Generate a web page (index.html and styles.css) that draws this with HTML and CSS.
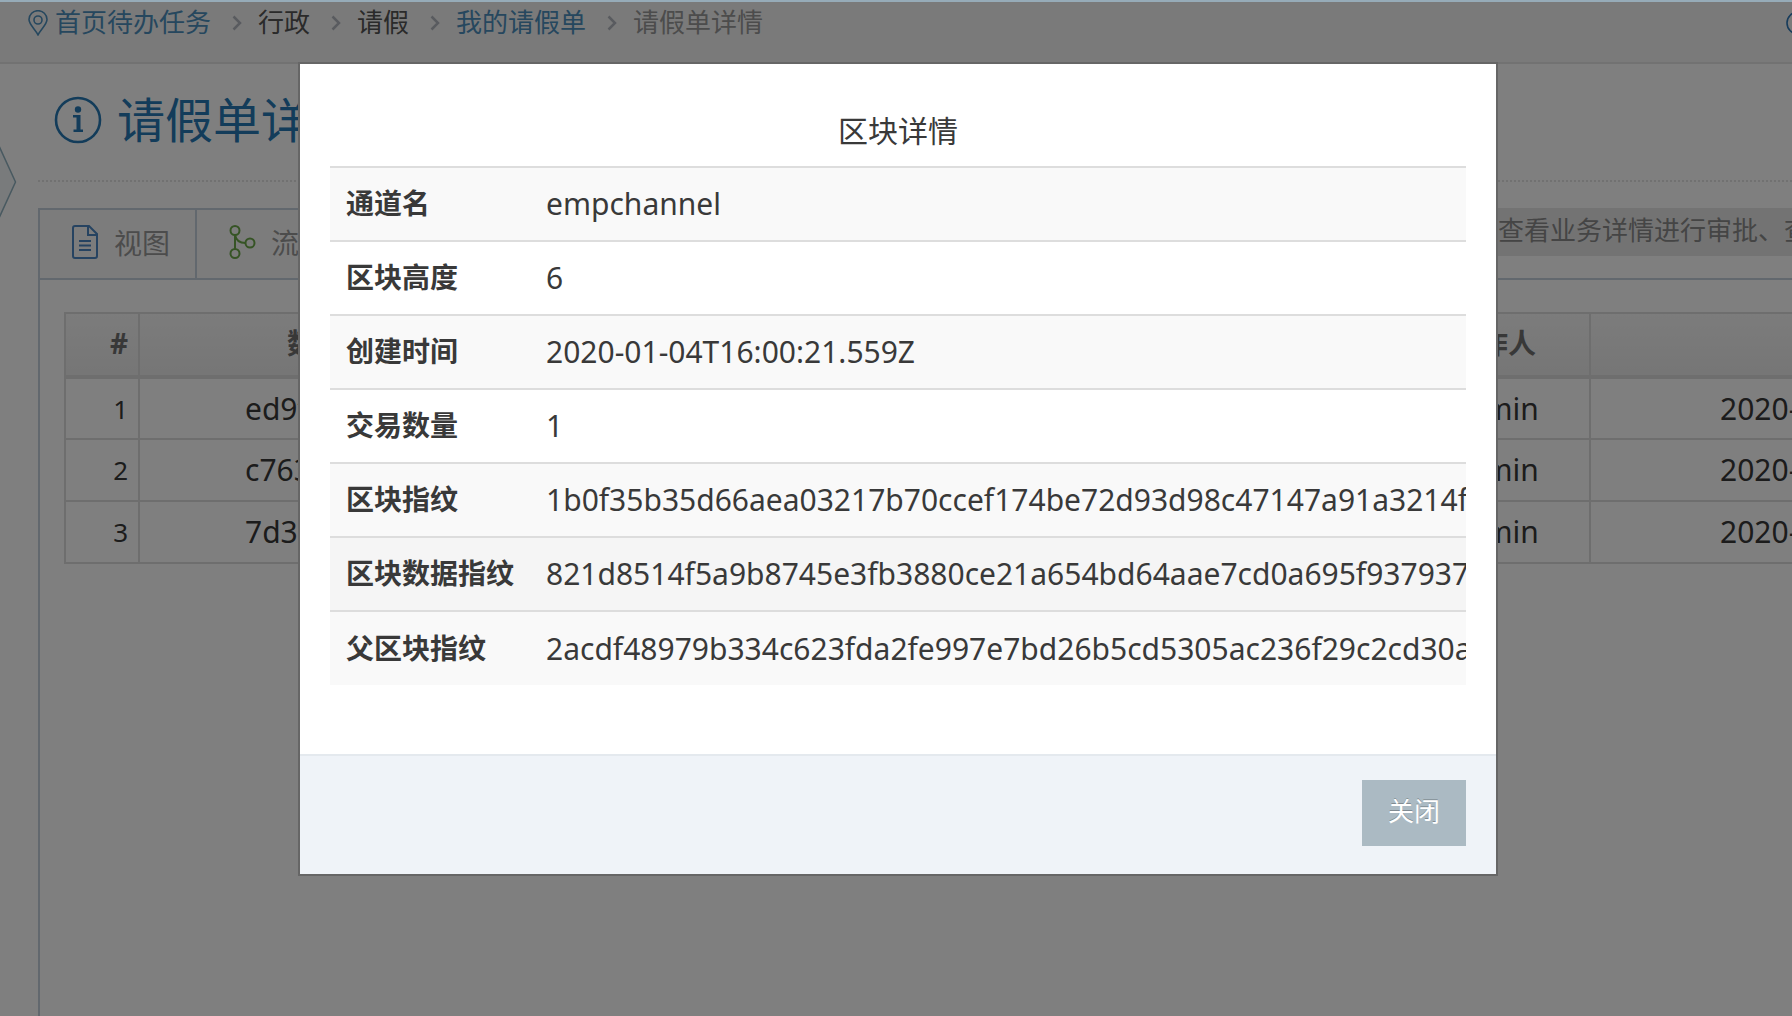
FILE: index.html
```html
<!DOCTYPE html>
<html lang="zh-CN">
<head>
<meta charset="utf-8">
<title>请假单详情</title>
<link rel="stylesheet" href="styles.css">
</head>
<body>
<div class="progress"></div>
<div class="page">
  <header class="crumb-bar">
    <nav class="crumbs" aria-label="位置">
      <svg class="pin" width="20" height="26" viewBox="0 0 20 26" fill="none" stroke="currentColor" stroke-width="1.6"><path d="M10 24.800C7.500 19.500 1 14.500 1 9.500a9 8.800 0 0 1 18 0C19 14.500 12.500 19.500 10 24.800Z"/><circle cx="10" cy="10" r="4"/></svg>
      <a class="crumb crumb-home" href="#">首页待办任务</a>
      <svg class="sep" width="10" height="16" viewBox="0 0 10 16"><path d="M1.500 1.500L8 8l-6.500 6.500"/></svg>
      <span class="crumb">行政</span>
      <svg class="sep" width="10" height="16" viewBox="0 0 10 16"><path d="M1.500 1.500L8 8l-6.500 6.500"/></svg>
      <span class="crumb">请假</span>
      <svg class="sep" width="10" height="16" viewBox="0 0 10 16"><path d="M1.500 1.500L8 8l-6.500 6.500"/></svg>
      <a class="crumb" href="#">我的请假单</a>
      <svg class="sep" width="10" height="16" viewBox="0 0 10 16"><path d="M1.500 1.500L8 8l-6.500 6.500"/></svg>
      <span class="crumb crumb-current">请假单详情</span>
    </nav>
    <svg class="help" width="24" height="24" viewBox="0 0 24 24" fill="none" stroke="currentColor" stroke-width="1.6"><circle cx="12" cy="12" r="11"/></svg>
  </header>
  <svg class="side-handle" width="17" height="82" viewBox="0 0 17 82"><path d="M-6 -14L15.500 33L-6 80"/></svg>
  <main class="content">
    <h1 class="heading">
      <svg width="48" height="48" viewBox="0 0 48 48"><circle cx="24" cy="24" r="22" fill="none" stroke="currentColor" stroke-width="2.600"/><circle cx="24" cy="13.500" r="3.200" fill="currentColor"/><path d="M19 19h7.500v14.500h2.500v2.500h-9.500v-2.500h3v-12h-3.500z" fill="currentColor"/></svg>
      <span>请假单详情</span>
    </h1>
    <section class="panel">
      <div class="tab-row">
        <div class="tabs">
          <button class="tab" type="button">
            <svg width="28" height="36" viewBox="0 0 28 36" fill="none" stroke="#4c86c2" stroke-width="2"><path d="M4 2h14l8 8v22a2 2 0 0 1-2 2H4a2 2 0 0 1-2-2V4a2 2 0 0 1 2-2z"/><path d="M17 2v9h9M8 17h12M8 21.500h12M8 26h12"/></svg>
            <span>视图</span>
          </button>
          <button class="tab" type="button">
            <svg width="28" height="36" viewBox="0 0 28 36" fill="none" stroke="#6ca84a" stroke-width="2"><circle cx="7" cy="6.500" r="4.500"/><circle cx="7" cy="29.500" r="4.500"/><circle cx="22" cy="19" r="4.500"/><path d="M7 11v14M7 11c1 5 5 8 10.500 8"/></svg>
            <span>流程</span>
          </button>
        </div>
        <p class="hint">您可以查看业务详情进行审批、查看</p>
      </div>
      <div class="panel-body">
        <table class="records">
          <colgroup><col class="c-no"><col class="c-id"><col class="c-main"><col class="c-user"><col class="c-time"></colgroup>
          <thead><tr><th class="no">#</th><th>数据指纹</th><th></th><th>操作人</th><th></th></tr></thead>
          <tbody>
            <tr><td class="no">1</td><td class="hash">ed9f</td><td></td><td>admin</td><td class="time">2020-01-04</td></tr>
            <tr><td class="no">2</td><td class="hash">c763</td><td></td><td>admin</td><td class="time">2020-01-04</td></tr>
            <tr><td class="no">3</td><td class="hash">7d39</td><td></td><td>admin</td><td class="time">2020-01-04</td></tr>
          </tbody>
        </table>
      </div>
    </section>
  </main>
</div>
<div class="overlay">
  <div class="dialog" role="dialog" aria-modal="true" aria-labelledby="dialog-title">
    <div class="dialog-body">
      <h2 class="dialog-title" id="dialog-title">区块详情</h2>
      <div class="scroll">
        <table class="block-info">
          <tbody>
            <tr><th scope="row">通道名</th><td>empchannel</td></tr>
            <tr><th scope="row">区块高度</th><td>6</td></tr>
            <tr><th scope="row">创建时间</th><td>2020-01-04T16:00:21.559Z</td></tr>
            <tr><th scope="row">交易数量</th><td>1</td></tr>
            <tr><th scope="row">区块指纹</th><td>1b0f35b35d66aea03217b70ccef174be72d93d98c47147a91a3214f</td></tr>
            <tr class="active"><th scope="row">区块数据指纹</th><td>821d8514f5a9b8745e3fb3880ce21a654bd64aae7cd0a695f937937</td></tr>
            <tr><th scope="row">父区块指纹</th><td>2acdf48979b334c623fda2fe997e7bd26b5cd5305ac236f29c2cd30a</td></tr>
          </tbody>
        </table>
      </div>
    </div>
    <footer class="dialog-footer"><button class="close" type="button">关闭</button></footer>
  </div>
</div>
</body>
</html>
```
FILE: styles.css
```css
* { box-sizing: border-box; }
html, body { height: 100%; }
body {
  margin: 0;
  overflow: hidden;
  background: #fff;
  color: #393939;
  font-family: "Noto Sans", "Noto Sans CJK SC", sans-serif;
  font-size: 26px;
}
a { color: #4c8fbd; text-decoration: none; }
button { font-family: inherit; border: 0; }
svg { flex: none; display: block; }

.progress { position: fixed; z-index: 3; top: 0; left: 0; right: 0; height: 2px; background: #96abb8; }
.page { min-height: 100%; display: flex; flex-direction: column; }

.crumb-bar {
  height: 64px;
  padding: 4px 0 20px 28px;
  display: flex;
  align-items: center;
  justify-content: space-between;
  overflow: hidden;
  background: #f5f5f5;
  border-bottom: 2px solid #e5e5e5;
}
.crumbs { display: flex; align-items: center; line-height: 36px; white-space: nowrap; color: #555; }
.crumb { padding-bottom: 2px; }
.pin { color: #4c8fbd; margin-right: 7px; }
.sep { margin: 0 16px 0 21px; fill: none; stroke: #b2b6bf; stroke-width: 2.500; }
.crumb-current { color: #999; }
.help { color: #2f78b7; margin-right: -18px; }

.side-handle { position: absolute; left: 0; top: 149px; overflow: visible; fill: #f2f6f9; stroke: #92b3c1; stroke-width: 1.500; }

.content { flex: 1; display: flex; flex-direction: column; padding: 0 0 0 38px; }
.heading {
  margin: 0 0 26px;
  padding: 17px 0 21px 16px;
  display: flex;
  align-items: center;
  gap: 15px;
  line-height: 78px;
  border-bottom: 2px dotted #e2e2e2;
  color: #2679b5;
  font-size: 48px;
  font-weight: 400;
}
.panel { flex: 1; display: flex; flex-direction: column; border-left: 2px solid #c5d0dc; }
.tab-row { display: flex; justify-content: space-between; height: 72px; border-bottom: 2px solid #c5d0dc; }
.tabs { display: flex; border-top: 2px solid #c5d0dc; }
.tab {
  display: flex;
  align-items: center;
  gap: 15px;
  padding: 0 25px 4px 31px;
  border-right: 2px solid #c5d0dc;
  background: #f9f9f9;
  color: #999;
  font-size: 28px;
}
.hint { margin: 0 -44px 0 0; height: 48px; padding: 0 0 0 20px; line-height: 44px; background: #e7e7e7; color: #8a8a8a; white-space: nowrap; }
.panel-body { padding: 32px 0 0 24px; overflow: hidden; }

.records { width: calc(100% + 300px); border-collapse: collapse; table-layout: fixed; }
.c-no { width: 74px; }
.c-id { width: 408px; }
.c-user { width: 192px; }
.c-time { width: 501px; }
.records th, .records td { border: 2px solid #ddd; padding: 0; height: 62px; line-height: 36px; text-align: center; font-size: 30px; }
.records th { height: 64px; padding-bottom: 4px; border-bottom-width: 4px; background: linear-gradient(#f8f8f8, #ececec); color: #707070; font-size: 28px; }
.records .no { text-align: right; padding-right: 10px; }
.records td.no { font-size: 26px; }
.records .hash { padding-left: 105px; text-align: left; }
.records .time { padding-left: 129px; text-align: left; }

.overlay {
  position: fixed;
  z-index: 2;
  inset: 0;
  display: flex;
  justify-content: center;
  align-items: flex-start;
  padding: 62px 0 0 4px;
  background: rgba(0, 0, 0, .5);
}
.dialog { width: 1200px; max-width: 90%; background: #fff; border: 2px solid #666; }
.dialog-body { padding: 36px 30px 69px; }
.dialog-title { margin: 0; padding-bottom: 4px; line-height: 62px; text-align: center; font-size: 30px; font-weight: 400; }
.scroll { overflow: hidden; }
.block-info { width: 100%; border-collapse: collapse; white-space: nowrap; }
.block-info th, .block-info td { height: 74px; padding: 0 16px; line-height: 36px; text-align: left; border-top: 2px solid #ddd; }
.block-info th { width: 200px; padding-bottom: 2px; font-size: 28px; }
.block-info td { font-size: 30px; }
.block-info tr:nth-child(odd) { background: #f9f9f9; }
.block-info .active { background: #f5f5f5; }
.block-info tr:last-child { background: #f9f9f9; }
.dialog-footer { display: flex; justify-content: flex-end; padding: 24px 30px 28px; background: #eff3f8; border-top: 2px solid #e4e9ee; }
.close { height: 66px; padding: 0 26px 6px; background: #abbac3; color: #fff; font-size: 26px; text-shadow: 0 -1px 0 rgba(0, 0, 0, .25); }
```
